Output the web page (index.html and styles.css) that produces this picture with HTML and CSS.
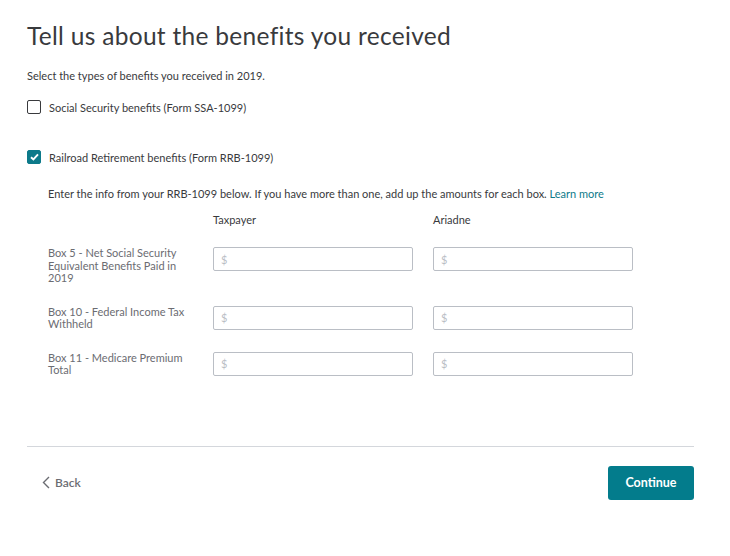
FILE: index.html
```html
<!DOCTYPE html>
<html lang="en">
<head>
    <meta charset="UTF-8">
    <title>Benefits</title>
    <link rel="stylesheet" href="styles.css">
</head>
<body>
    <div class="page">
        <h1>Tell us about the benefits you received</h1>
        <p class="intro">Select the types of benefits you received in 2019.</p>

        <!-- Benefit types -->
        <label class="check">
            <span class="box"></span>
            <span>Social Security benefits (Form SSA-1099)</span>
        </label>
        <label class="check checked">
            <span class="box">
                <svg width="9" height="8" viewBox="0 0 9 8"><path d="M1 4.2 L3.4 6.5 L8 1.4" fill="none" stroke="#fff" stroke-width="1.9"/></svg>
            </span>
            <span>Railroad Retirement benefits (Form RRB-1099)</span>
        </label>

        <!-- RRB-1099 detail -->
        <div class="details">
            <p class="hint">Enter the info from your RRB-1099 below. If you have more than one, add up the amounts for each box. <a href="#">Learn more</a></p>
            <div class="grid">
                <div></div>
                <div class="col-head">Taxpayer</div>
                <div class="col-head">Ariadne</div>

                <div class="row-label">Box 5 - Net Social Security Equivalent Benefits Paid in 2019</div>
                <input type="text" placeholder="$">
                <input type="text" placeholder="$">

                <div class="row-label">Box 10 - Federal Income Tax Withheld</div>
                <input type="text" placeholder="$">
                <input type="text" placeholder="$">

                <div class="row-label">Box 11 - Medicare Premium Total</div>
                <input type="text" placeholder="$">
                <input type="text" placeholder="$">
            </div>
        </div>

        <!-- Footer nav -->
        <div class="actions">
            <a href="#" class="back">
                <svg width="8" height="13" viewBox="0 0 8 13"><path d="M7 1 L1.5 6.5 L7 12" fill="none" stroke="#6b6c72" stroke-width="1.4"/></svg>
                Back
            </a>
            <button class="btn">Continue</button>
        </div>
    </div>
</body>
</html>
```

FILE: styles.css
```css
/* General styling */
* {
    margin: 0;
    padding: 0;
    box-sizing: border-box;
}
body {
    font-family: Lato, "Open Sans", sans-serif;
    color: #393a3d;
    background-color: #fff;
}
.page {
    width: 667px;
    margin-left: 27px;
    padding-top: 22px;
}

h1 {
    font-size: 24.5px;
    font-weight: 400;
    line-height: 28px;
    color: #393a3d;
    letter-spacing: 0.3px;
}
.intro {
    font-size: 11px;
    margin-top: 19px;
    line-height: 14px;
}

/* Checkboxes */
.check {
    display: flex;
    align-items: center;
    gap: 8px;
    font-size: 11px;
    color: #393a3d;
    margin-top: 17px;
    height: 14px;
}
.check + .check {
    margin-top: 36px;
}
.box {
    width: 14px;
    height: 14px;
    border: 1px solid #393a3d;
    border-radius: 2px;
    display: flex;
    align-items: center;
    justify-content: center;
}
.checked .box {
    background-color: #0d7a8a;
    border-color: #0d7a8a;
}

/* Details */
.details {
    padding-left: 21px;
    margin-top: 23px;
}
.hint {
    font-size: 11px;
    line-height: 14px;
}
.hint a {
    color: #0d7a8a;
    text-decoration: none;
}
.grid {
    display: grid;
    grid-template-columns: 145px 200px 200px;
    column-gap: 20px;
    margin-top: 12px;
    align-items: start;
}
.col-head {
    font-size: 11px;
    line-height: 14px;
    margin-bottom: 20px;
}
.row-label {
    font-size: 11px;
    line-height: 12.5px;
    color: #6b6c72;
    margin-bottom: 21px;
}
.grid input {
    height: 24px;
    border: 1px solid #babec5;
    border-radius: 2px;
    padding: 0 7px;
    font-family: inherit;
    font-size: 11px;
}
.grid input::placeholder {
    color: #babec5;
}

/* Footer nav */
.actions {
    border-top: 1px solid #d4d7dc;
    margin-top: 48px;
    padding-top: 19px;
    display: flex;
    justify-content: space-between;
    align-items: center;
}
.back {
    display: flex;
    align-items: center;
    gap: 5px;
    margin-left: 15px;
    color: #6b6c72;
    font-size: 12px;
    font-weight: 600;
    text-decoration: none;
}
.btn {
    background-color: #037c8c;
    color: #fff;
    border: none;
    border-radius: 3px;
    width: 86px;
    height: 34px;
    font-family: inherit;
    font-size: 12.5px;
    font-weight: 700;
}
```
